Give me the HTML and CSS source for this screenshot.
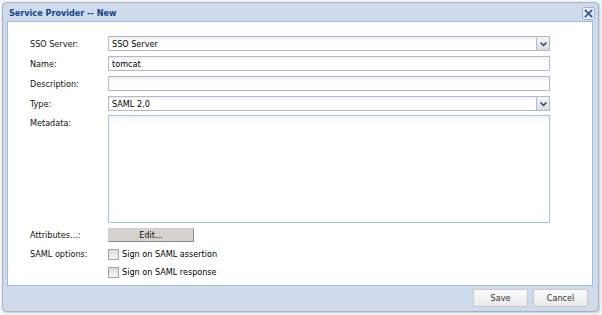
FILE: index.html
```html
<!DOCTYPE html>
<html>
<head>
<meta charset="utf-8">
<link rel="stylesheet" href="styles.css">
</head>
<body>
<div class="win">
  <div class="win-header">
    <span class="win-title">Service Provider -- New</span>
    <span class="win-close"><svg width="11" height="11" viewBox="0 0 11 11"><path d="M2.5 2.5 L8.5 8.5 M8.5 2.5 L2.5 8.5" stroke="#3a5a94" stroke-width="1.8" stroke-linecap="square"/></svg></span>
  </div>
  <div class="win-body">
    <div class="form">
      <div class="row">
        <label class="lbl">SSO Server:</label>
        <div class="combo"><span class="val">SSO Server</span><span class="trigger"><svg width="9" height="6" viewBox="0 0 9 6"><path d="M1.5 1.5 L4.5 4.3 L7.5 1.5" fill="none" stroke="#2a4f8f" stroke-width="1.7"/></svg></span></div>
      </div>
      <div class="row">
        <label class="lbl">Name:</label>
        <div class="field"><span class="val">tomcat</span></div>
      </div>
      <div class="row">
        <label class="lbl">Description:</label>
        <div class="field"></div>
      </div>
      <div class="row">
        <label class="lbl">Type:</label>
        <div class="combo"><span class="val">SAML 2.0</span><span class="trigger"><svg width="9" height="6" viewBox="0 0 9 6"><path d="M1.5 1.5 L4.5 4.3 L7.5 1.5" fill="none" stroke="#2a4f8f" stroke-width="1.7"/></svg></span></div>
      </div>
      <div class="row row-top">
        <label class="lbl">Metadata:</label>
        <div class="textarea"></div>
      </div>
      <div class="row row-attr">
        <label class="lbl">Attributes...:</label>
        <div class="edit-btn">Edit...</div>
      </div>
      <div class="row row-check">
        <label class="lbl">SAML options:</label>
        <div class="check"><span class="box"></span><span>Sign on SAML assertion</span></div>
      </div>
      <div class="row row-check row-check2">
        <label class="lbl"></label>
        <div class="check"><span class="box"></span><span>Sign on SAML response</span></div>
      </div>
    </div>
  </div>
  <div class="win-footer">
    <div class="btn">Save</div>
    <div class="btn">Cancel</div>
  </div>
</div>
</body>
</html>
```

FILE: styles.css
```css
html, body {
  margin: 0;
  padding: 0;
}
body {
  background: #f4f4f4;
  width: 602px;
  height: 315px;
  font-family: "DejaVu Sans Condensed", "DejaVu Sans", sans-serif;
  font-size: 9px;
  color: #000;
}
.win {
  box-sizing: border-box;
  margin: 2px 0 0 2px;
  width: 597px;
  height: 310px;
  border: 1px solid #a6b1bf;
  border-radius: 4px;
  background: #cfdbea;
  display: flex;
  flex-direction: column;
  box-shadow: 1px 1px 2px rgba(0,0,0,0.15);
}
.win-header {
  height: 18px;
  display: flex;
  align-items: center;
  justify-content: space-between;
  padding: 0 3px 0 6px;
}
.win-title {
  font-weight: bold;
  color: #15428b;
  font-size: 9px;
  padding-top: 2px;
}
.win-close {
  width: 13px;
  height: 13px;
  box-sizing: border-box;
  border: 1px solid #9fb6d6;
  border-radius: 2px;
  background: #e8eef7;
  display: flex;
  align-items: center;
  justify-content: center;
  margin-top: 3px;
}
.win-body {
  margin: 0 5px 0 4px;
  height: 265px;
  box-sizing: border-box;
  border: 1px solid #99bbe8;
  background: #fff;
}
.form {
  padding: 14px 0 0 22px;
  display: flex;
  flex-direction: column;
  gap: 5px;
}
.row {
  display: flex;
  align-items: center;
}
.row-top {
  align-items: flex-start;
  margin-top: -1px;
}
.row-top .lbl {
  padding-top: 3px;
}
.lbl {
  width: 78px;
  flex: none;
  color: #111;
}
.field, .combo {
  box-sizing: border-box;
  width: 442px;
  height: 15px;
  border: 1px solid #b5b8c8;
  background: linear-gradient(#eef0f3, #fff 5px);
  display: flex;
  align-items: center;
  position: relative;
}
.val {
  padding-left: 3px;
}
.trigger {
  position: absolute;
  right: -1px;
  top: -1px;
  width: 14px;
  height: 15px;
  box-sizing: border-box;
  border: 1px solid #b5b8c8;
  background: linear-gradient(#f6f6f6, #dcdcdc);
  display: flex;
  align-items: center;
  justify-content: center;
}
.textarea {
  box-sizing: border-box;
  width: 442px;
  height: 108px;
  border: 1px solid #a7c4e6;
  background: linear-gradient(#eef3f9, #fff 6px);
}
.edit-btn {
  box-sizing: border-box;
  width: 86px;
  height: 14px;
  border: 1px solid #8c8c8c;
  border-top-color: #cfcfcf;
  border-left-color: #cfcfcf;
  background: #d6d3ce;
  display: flex;
  align-items: center;
  justify-content: center;
  color: #111;
}
.row-check {
  height: 14px;
}
.row-check2 {
  margin-top: -1px;
}
.check {
  display: flex;
  align-items: center;
  gap: 3px;
}
.box {
  box-sizing: border-box;
  width: 11px;
  height: 11px;
  border: 1px solid #a4a4a4;
  background: linear-gradient(#dcdcdc, #f4f4f4);
}
.win-footer {
  flex: 1;
  display: flex;
  justify-content: flex-end;
  align-items: flex-start;
  gap: 5px;
  padding: 3px 10px 0 0;
}
.btn {
  box-sizing: border-box;
  width: 55px;
  height: 18px;
  border: 1px solid #c6c9ce;
  border-radius: 2px;
  background: linear-gradient(#fbfbfb, #e9e9e9);
  display: flex;
  align-items: center;
  justify-content: center;
  color: #333;
}
```
